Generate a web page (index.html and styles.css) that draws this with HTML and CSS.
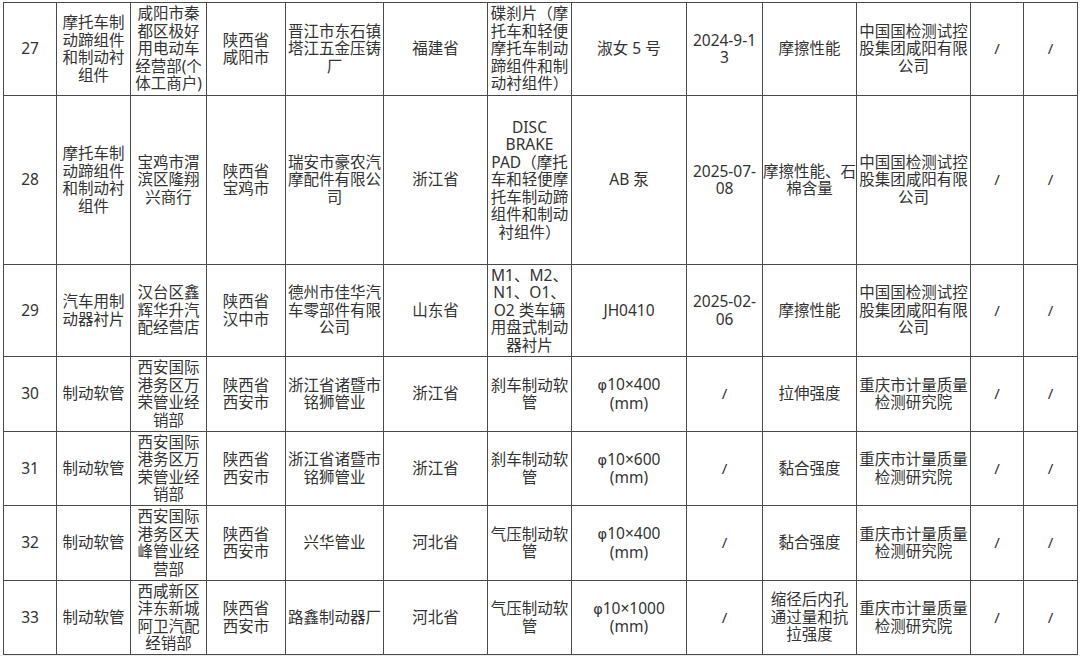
FILE: index.html
```html
<!DOCTYPE html>
<html lang="zh-CN">
<head>
<meta charset="utf-8">
<title>抽查结果</title>
<link rel="stylesheet" href="styles.css">
</head>
<body>
<div class="page">
<table class="grid">
<colgroup>
<col class="c1"><col class="c2"><col class="c3"><col class="c4"><col class="c5"><col class="c6"><col class="c7"><col class="c8"><col class="c9"><col class="c10"><col class="c11"><col class="c12"><col class="c13">
</colgroup>
<tbody>
<tr class="r27">
<td>27</td>
<td>摩托车制<br>动蹄组件<br>和制动衬<br>组件</td>
<td>咸阳市秦<br>都区极好<br>用电动车<br>经营部(个<br>体工商户)</td>
<td>陕西省<br>咸阳市</td>
<td>晋江市东石镇<br>塔江五金压铸<br>厂</td>
<td>福建省</td>
<td>碟刹片（摩<br>托车和轻便<br>摩托车制动<br>蹄组件和制<br>动衬组件）</td>
<td>淑女 5 号</td>
<td>2024-9-1<br>3</td>
<td>摩擦性能</td>
<td>中国国检测试控<br>股集团咸阳有限<br>公司</td>
<td class="sl">/</td>
<td class="sl">/</td>
</tr>
<tr class="r28">
<td>28</td>
<td>摩托车制<br>动蹄组件<br>和制动衬<br>组件</td>
<td>宝鸡市渭<br>滨区隆翔<br>兴商行</td>
<td>陕西省<br>宝鸡市</td>
<td>瑞安市豪农汽<br>摩配件有限公<br>司</td>
<td>浙江省</td>
<td>DISC<br>BRAKE<br>PAD（摩托<br>车和轻便摩<br>托车制动蹄<br>组件和制动<br>衬组件）</td>
<td>AB 泵</td>
<td>2025-07-<br>08</td>
<td>摩擦性能、石<br>棉含量</td>
<td>中国国检测试控<br>股集团咸阳有限<br>公司</td>
<td class="sl">/</td>
<td class="sl">/</td>
</tr>
<tr class="r29">
<td>29</td>
<td>汽车用制<br>动器衬片</td>
<td>汉台区鑫<br>辉华升汽<br>配经营店</td>
<td>陕西省<br>汉中市</td>
<td>德州市佳华汽<br>车零部件有限<br>公司</td>
<td>山东省</td>
<td>M1、M2、<br>N1、O1、<br>O2 类车辆<br>用盘式制动<br>器衬片</td>
<td>JH0410</td>
<td>2025-02-<br>06</td>
<td>摩擦性能</td>
<td>中国国检测试控<br>股集团咸阳有限<br>公司</td>
<td class="sl">/</td>
<td class="sl">/</td>
</tr>
<tr class="r30">
<td>30</td>
<td>制动软管</td>
<td>西安国际<br>港务区万<br>荣管业经<br>销部</td>
<td>陕西省<br>西安市</td>
<td>浙江省诸暨市<br>铭狮管业</td>
<td>浙江省</td>
<td>刹车制动软<br>管</td>
<td><span class="phi">φ</span>10×400<br>(mm)</td>
<td class="sl">/</td>
<td>拉伸强度</td>
<td>重庆市计量质量<br>检测研究院</td>
<td class="sl">/</td>
<td class="sl">/</td>
</tr>
<tr class="r31">
<td>31</td>
<td>制动软管</td>
<td>西安国际<br>港务区万<br>荣管业经<br>销部</td>
<td>陕西省<br>西安市</td>
<td>浙江省诸暨市<br>铭狮管业</td>
<td>浙江省</td>
<td>刹车制动软<br>管</td>
<td><span class="phi">φ</span>10×600<br>(mm)</td>
<td class="sl">/</td>
<td>黏合强度</td>
<td>重庆市计量质量<br>检测研究院</td>
<td class="sl">/</td>
<td class="sl">/</td>
</tr>
<tr class="r32">
<td>32</td>
<td>制动软管</td>
<td>西安国际<br>港务区天<br>峰管业经<br>营部</td>
<td>陕西省<br>西安市</td>
<td>兴华管业</td>
<td>河北省</td>
<td>气压制动软<br>管</td>
<td><span class="phi">φ</span>10×400<br>(mm)</td>
<td class="sl">/</td>
<td>黏合强度</td>
<td>重庆市计量质量<br>检测研究院</td>
<td class="sl">/</td>
<td class="sl">/</td>
</tr>
<tr class="r33">
<td>33</td>
<td>制动软管</td>
<td>西咸新区<br>沣东新城<br>阿卫汽配<br>经销部</td>
<td>陕西省<br>西安市</td>
<td>路鑫制动器厂</td>
<td>河北省</td>
<td>气压制动软<br>管</td>
<td><span class="phi">φ</span>10×1000<br>(mm)</td>
<td class="sl">/</td>
<td>缩径后内孔<br>通过量和抗<br>拉强度</td>
<td>重庆市计量质量<br>检测研究院</td>
<td class="sl">/</td>
<td class="sl">/</td>
</tr>
</tbody>
</table>
</div>
</body>
</html>
```

FILE: styles.css
```css
html, body {
  margin: 0;
  padding: 0;
  background: #ededed;
}
.page {
  width: 1080px;
  height: 655px;
  background: #ffffff;
  padding: 2px 0 0 3px;
  box-sizing: border-box;
}
.grid {
  border-collapse: collapse;
  table-layout: fixed;
  width: 1075px;
  font-family: "Noto Sans", "Noto Sans CJK SC", sans-serif;
  font-size: 15.5px;
  line-height: 17.5px;
  color: #333333;
}
.grid td {
  border: 1px solid #4a4a4a;
  text-align: center;
  vertical-align: middle;
  padding: 0;
  white-space: nowrap;
  overflow: visible;
}
.grid .sl { font-size: 15px; }
.phi { font-family: "DejaVu Sans", sans-serif; font-size: 14.5px; }
.c1 { width: 53px; }
.c2 { width: 74px; }
.c3 { width: 76px; }
.c4 { width: 79px; }
.c5 { width: 98px; }
.c6 { width: 104px; }
.c7 { width: 84px; }
.c8 { width: 115px; }
.c9 { width: 76px; }
.c10 { width: 94px; }
.c11 { width: 114px; }
.c12 { width: 53px; }
.c13 { width: 54px; }
.r27 td { height: 92px; }
.r28 td { height: 168px; }
.r29 td { height: 91px; }
.r30 td { height: 74px; }
.r31 td { height: 73px; }
.r32 td { height: 74px; }
.r33 td { height: 73px; }
```
